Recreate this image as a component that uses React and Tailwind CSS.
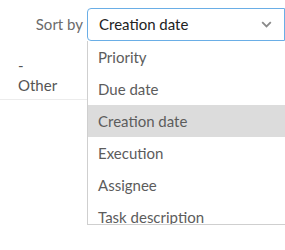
import React from 'react';

const options = ['Priority', 'Due date', 'Creation date', 'Execution', 'Assignee', 'Task description'];

export default function App() {
  const selected = 'Creation date';
  return (
    <div className="relative w-[285px] h-[250px] overflow-hidden bg-white text-[15px]" style={{ fontFamily: 'Lato, "Open Sans", sans-serif' }}>
      <div className="flex items-center pt-[8px]">
        <div className="w-[87px] pr-[4px] text-right text-[#6b6b6b]">Sort by</div>
        <div className="flex flex-1 h-[33px] items-center justify-between rounded-l-[4px] border border-[#6aaee6] pl-[11px] pr-[12px] text-[#222]">
          <span>{selected}</span>
          <svg width="11" height="7" viewBox="0 0 11 7" fill="none">
            <path d="M1.2 1.2 L5.5 5.5 L9.8 1.2" stroke="#8a8a8a" strokeWidth="1.8" />
          </svg>
        </div>
      </div>
      <div className="w-[87px] border-b border-[#ececec] pl-[18px] pt-[14px] pb-[4px] leading-[20px] text-[#555]">
        <div>-</div>
        <div>Other</div>
      </div>

      <div className="absolute left-[87px] top-[41px] right-0 h-[184px] overflow-hidden border-l border-b border-[#cfcfcf] bg-white">
        {options.map((o) => (
          <div
            key={o}
            className={`flex h-[32px] items-center pl-[10px] text-[#5c5c5c] ${o === selected ? 'bg-[#dcdcdc]' : ''}`}
          >
            {o}
          </div>
        ))}
      </div>
    </div>
  );
}
